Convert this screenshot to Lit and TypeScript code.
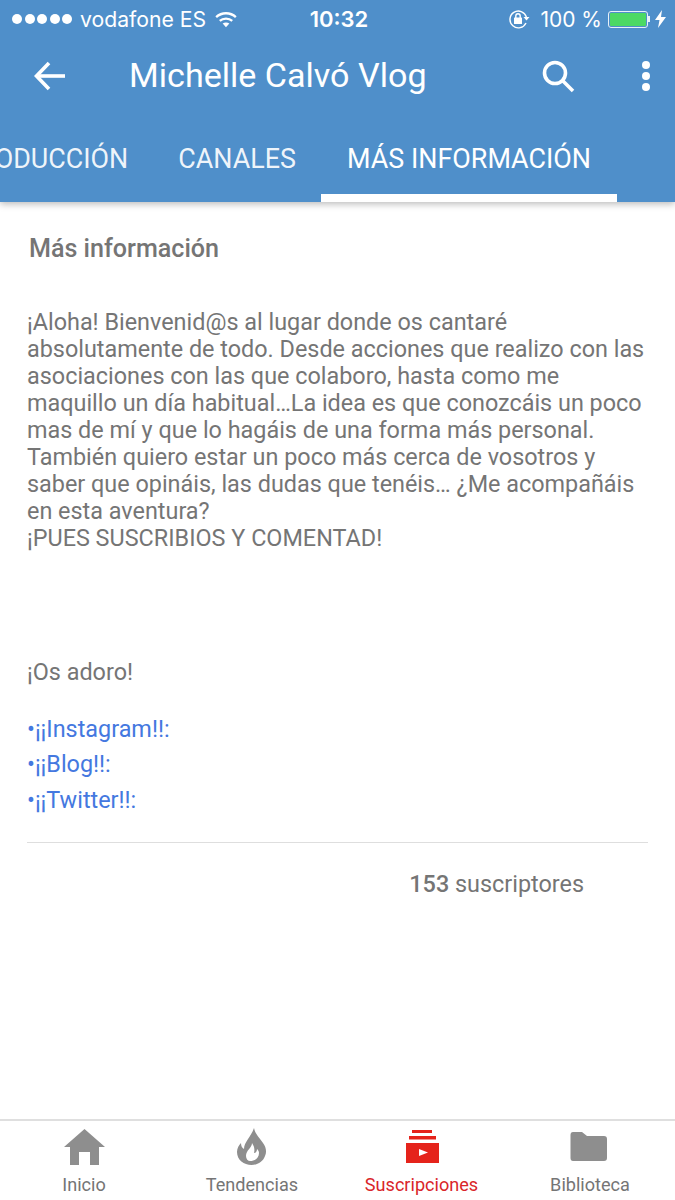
import { LitElement, css, html, svg } from 'lit';
import { customElement } from 'lit/decorators.js';

const NAV = [
  {
    label: 'Inicio',
    active: false,
    icon: svg`<path d="M22.500 1 L43 19 H37 V37 H28 V24 H17 V37 H8 V19 H2 Z" fill="currentColor"/>`,
  },
  {
    label: 'Tendencias',
    active: false,
    icon: svg`<path fill-rule="evenodd" fill="currentColor" d="M24 0 C25 6 30 10 33 15 C36 19 37 24 35 28 C33 34 27 37 21.500 37 C14 37 7 32 7 24 C7 20 9 17 11 15 C11 18 12 20 14 21 C14 14 21 9 24 0 Z M22 15 C22 20 16 22 16 28 C16 31 18 33 20 33 C25 33 29 30 29 25 C29 23 28 22 27 21 C27 23 26 25 24 25 C25 21 24 18 22 15 Z"/>`,
  },
  {
    label: 'Suscripciones',
    active: true,
    icon: svg`<rect x="12" y="2" width="20" height="3" fill="currentColor"/>
      <rect x="9" y="8" width="27" height="3.500" fill="currentColor"/>
      <rect x="6" y="15" width="33" height="20" fill="currentColor"/>
      <path d="M19 21 L28 24.500 L19 28 Z" fill="#fff"/>`,
  },
  {
    label: 'Biblioteca',
    active: false,
    icon: svg`<path d="M5 4 H14 L19 8 H36 Q39 8 39 11 V30 Q39 33 36 33 H5 Q2.500 33 2.500 30 V7 Q2.500 4 5 4 Z" fill="currentColor"/>`,
  },
];

@customElement('app-root')
export class AppRoot extends LitElement {
  static styles = css`
    :host {
      display: flex;
      flex-direction: column;
      width: 675px;
      height: 1200px;
      overflow: hidden;
      background: #fff;
      font-family: Roboto, 'Noto Sans', sans-serif;
      color: #757575;
    }
    .head {
      flex: none;
      height: 202px;
      background: #4f8fca;
      color: #fff;
      box-shadow: 0 2px 7px rgba(0, 0, 0, 0.28);
      position: relative;
    }
    .status {
      display: grid;
      grid-template-columns: 1fr auto 1fr;
      align-items: center;
      height: 38px;
      padding: 0 9px 0 12px;
      font-family: Inter, sans-serif;
    }
    .status-left,
    .status-right {
      display: flex;
      align-items: center;
    }
    .status-right {
      justify-content: flex-end;
    }
    .dots {
      display: flex;
      gap: 2.5px;
      margin-right: 8px;
    }
    .dots i {
      width: 10px;
      height: 10px;
      border-radius: 50%;
      background: #fff;
    }
    .carrier {
      font-size: 21.2px;
    }
    .wifi {
      margin-left: 9px;
    }
    .clock {
      font-size: 22px;
      font-weight: 600;
    }
    .percent {
      font-size: 21px;
      margin: 0 6px 0 10px;
    }
    .battery {
      display: flex;
      align-items: center;
      width: 40px;
      height: 17px;
      box-sizing: border-box;
      padding: 1px;
      border: 1px solid #e8f1f8;
      border-radius: 3px;
    }
    .battery i {
      display: block;
      width: 100%;
      height: 100%;
      background: #4cd964;
      border-radius: 1px;
    }
    .nub {
      width: 2px;
      height: 6px;
      background: #e8f1f8;
      margin-right: 5px;
    }
    .toolbar {
      display: flex;
      align-items: center;
      height: 76px;
      padding-left: 34px;
    }
    .title {
      flex: 1;
      font-size: 34.1px;
      margin: -2px 0 0 63px;
      white-space: nowrap;
    }
    .search {
      margin-right: 66px;
    }
    .more {
      margin-right: 24px;
    }
    .tabs {
      display: flex;
      justify-content: flex-end;
      height: 88px;
      padding-right: 58px;
      overflow: hidden;
    }
    .tab {
      flex: none;
      display: flex;
      align-items: center;
      padding: 2px 25px 0;
      font-size: 26.9px;
      white-space: nowrap;
      color: rgba(255, 255, 255, 0.92);
    }
    .tab.on {
      padding: 2px 26px 0;
      box-shadow: inset 0 -8px #fff;
      color: #fff;
    }
    main {
      flex: 1;
      padding: 31px 27px 0;
    }
    h2 {
      margin: 0 0 0 2px;
      font-size: 25.1px;
      line-height: 32px;
      font-weight: 500;
    }
    .about {
      margin: 44px 0 0;
      font-size: 23.4px;
      line-height: 27px;
    }
    .bye {
      margin: 107px 0 0;
      font-size: 23.4px;
      line-height: 27px;
    }
    .links {
      display: flex;
      flex-direction: column;
      margin-top: 25.5px;
      font-size: 23.4px;
      line-height: 35.5px;
      color: #4478e0;
    }
    .subs {
      margin-top: 24px;
      padding: 26px 64px 0 0;
      border-top: 1px solid #dedede;
      text-align: right;
      font-size: 23.4px;
      line-height: 30px;
    }
    .subs b {
      font-weight: 500;
    }
    nav {
      flex: none;
      display: grid;
      grid-template-columns: 168px 168px 171px 166px;
      height: 81px;
      box-sizing: border-box;
      border-top: 2px solid #dfdfdf;
    }
    .item {
      display: flex;
      flex-direction: column;
      align-items: center;
      font-size: 18.1px;
    }
    .item.on {
      color: #d9262a;
    }
    .item svg {
      display: block;
      margin-top: 7px;
      color: #8e8e8e;
    }
    .item.on svg {
      color: #e5231b;
    }
    .item span {
      margin-top: 7px;
      line-height: 22px;
    }
  `;

  render() {
    return html`
      <header class="head">
        <div class="status">
          <div class="status-left">
            <div class="dots"><i></i><i></i><i></i><i></i><i></i></div>
            <span class="carrier">vodafone ES</span>
            <svg class="wifi" width="22" height="17" viewBox="0 0 23 17" fill="none" stroke="#fff" stroke-width="2.4">
              <path d="M1.2 6 C7 0.6 16 0.6 21.8 6" />
              <path d="M5 10 C8.5 6.8 14.5 6.800 18 10" />
              <path d="M11.5 16.5 L8 12.8 C10 11.2 13 11.2 15 12.8 Z" fill="#fff" stroke="none" />
            </svg>
          </div>
          <div class="clock">10:32</div>
          <div class="status-right">
            <svg width="22" height="20" viewBox="0 0 22 20" fill="none" stroke="#fff" stroke-width="1.4">
              <path d="M18 14 A8.4 8.4 0 1 1 18.4 8" />
              <path d="M15.5 8 H21.5 L18.5 11.5 Z" fill="#fff" stroke="none" />
              <rect x="6" y="8.5" width="8" height="6.5" rx="0.6" fill="#fff" stroke="none" />
              <path d="M7.8 9 V7 A2.2 2.2 0 0 1 12.2 7 V9" />
            </svg>
            <span class="percent">100 %</span>
            <div class="battery"><i></i></div>
            <div class="nub"></div>
            <svg width="11" height="18" viewBox="0 0 11 18"><path d="M7 0 L0 10 H4.5 L3 18 L11 7 H6 Z" fill="#fff" /></svg>
          </div>
        </div>
        <div class="toolbar">
          <svg width="32" height="30" viewBox="0 0 32 30" fill="none" stroke="#fff" stroke-width="3.6">
            <path d="M31 15 H3" />
            <path d="M15 2 L2.5 15 L15 28" />
          </svg>
          <div class="title">Michelle Calvó Vlog</div>
          <svg class="search" width="33" height="33" viewBox="0 0 33 33" fill="none" stroke="#fff" stroke-width="3.6">
            <circle cx="13" cy="13" r="10.5" />
            <path d="M20.5 20.5 L31 31" />
          </svg>
          <svg class="more" width="10" height="30" viewBox="0 0 10 30" fill="#fff">
            <circle cx="5" cy="4" r="4" />
            <circle cx="5" cy="15" r="4" />
            <circle cx="5" cy="26" r="4" />
          </svg>
        </div>
        <div class="tabs">
          <div class="tab">INTRODUCCIÓN</div>
          <div class="tab">CANALES</div>
          <div class="tab on">MÁS INFORMACIÓN</div>
        </div>
      </header>
      <main>
        <h2>Más información</h2>
        <p class="about">
          ¡Aloha! Bienvenid@s al lugar donde os cantaré<br />
          absolutamente de todo. Desde acciones que realizo con las<br />
          asociaciones con las que colaboro, hasta como me<br />
          maquillo un día habitual…La idea es que conozcáis un poco<br />
          mas de mí y que lo hagáis de una forma más personal.<br />
          También quiero estar un poco más cerca de vosotros y<br />
          saber que opináis, las dudas que tenéis… ¿Me acompañáis<br />
          en esta aventura?<br />
          ¡PUES SUSCRIBIOS Y COMENTAD!
        </p>
        <p class="bye">¡Os adoro!</p>
        <div class="links">
          <span>•¡¡Instagram!!:</span>
          <span>•¡¡Blog!!:</span>
          <span>•¡¡Twitter!!:</span>
        </div>
        <div class="subs"><b>153</b> suscriptores</div>
      </main>
      <nav>
        ${NAV.map(
          (n) => html`
            <div class="item ${n.active ? 'on' : ''}">
              <svg viewBox="0 0 44 39" width="44" height="39">${n.icon}</svg>
              <span>${n.label}</span>
            </div>
          `,
        )}
      </nav>
    `;
  }
}
